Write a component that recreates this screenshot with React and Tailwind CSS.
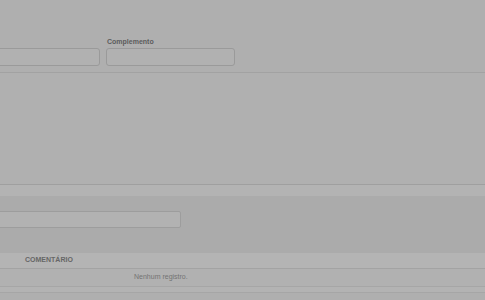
export default function App() {
  return (
    <div className="w-[485px] h-[300px] overflow-hidden bg-[#afafaf] text-[7px] flex flex-col" style={{ fontFamily: '"Liberation Sans", Arial, sans-serif' }}>
      {/* campos de endereço */}
      <div className="h-[72px] flex items-end gap-[6px] pb-[6px]">
        <div className="w-[120px] ml-[-20px] h-[18px] rounded-[3px] border border-[#9a9a9a] bg-[#b1b1b1]" />
        <div className="flex flex-col">
          <label className="font-bold text-[#5c5c5c] leading-none mb-[3px] pl-[1px]">Complemento</label>
          <div className="w-[129px] h-[18px] rounded-[3px] border border-[#9a9a9a] bg-[#b1b1b1]" />
        </div>
      </div>
      <div className="h-[1px] bg-[#a2a2a2]" />

      {/* área vazia */}
      <div className="h-[111px] bg-[#b0b0b0]" />
      <div className="h-[1px] bg-[#9f9f9f]" />
      <div className="h-[11px] bg-[#b3b3b3]" />

      {/* filtro */}
      <div className="h-[57px] bg-[#ababab] pt-[15px]">
        <div className="w-[201px] ml-[-20px] h-[17px] rounded-[2px] border border-[#9d9d9d] bg-[#b2b2b2]" />
      </div>

      {/* tabela */}
      <div className="h-[16px] bg-[#b4b4b4] flex items-center border-b border-[#a3a3a3]">
        <span className="ml-[25px] font-bold text-[#666666]">COMENTÁRIO</span>
      </div>
      <div className="h-[18px] bg-[#b1b1b1] flex items-center border-b border-[#a6a6a6]">
        <span className="ml-[134px] text-[#737373]">Nenhum registro.</span>
      </div>
      <div className="h-[6px] bg-[#b3b3b3] border-b border-[#a6a6a6]" />
      <div className="flex-1 bg-[#afafaf]" />
    </div>
  );
}
